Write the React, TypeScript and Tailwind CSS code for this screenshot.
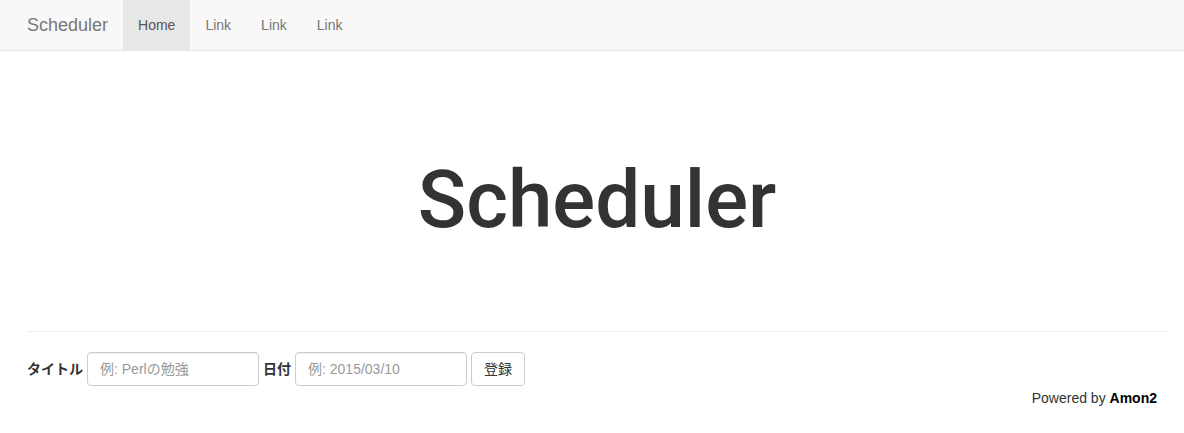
export default function App() {
  const font = { fontFamily: '"Liberation Sans", Arial, "Noto Sans CJK JP", sans-serif' }
  return (
    <div className="min-h-[433px] bg-white text-[14px] leading-[20px] text-[#333]" style={font}>
      <nav className="flex h-[51px] border-b border-[#e7e7e7] bg-[#f8f8f8] pl-[12px]">
        <a className="block h-[50px] px-[15px] py-[15px] text-[18px] leading-[20px] text-[#777]">Scheduler</a>
        <ul className="flex">
          <li><a className="block bg-[#e7e7e7] px-[15px] py-[15px] text-[#555]">Home</a></li>
          <li><a className="block px-[15px] py-[15px] text-[#777]">Link</a></li>
          <li><a className="block px-[15px] py-[15px] text-[#777]">Link</a></li>
          <li><a className="block px-[15px] py-[15px] text-[#777]">Link</a></li>
        </ul>
      </nav>

      <div className="mx-[27px] w-[1140px]">
        <div className="pt-[109px] pb-[91px] text-center">
          <h1 className="font-['Roboto',sans-serif] text-[80px] leading-[80px] font-medium text-[#333]">
            Scheduler
          </h1>
        </div>
        <hr className="border-t border-[#eee]" />

        <form className="mt-[20px] flex items-center">
          <label className="mr-[4px] font-bold">タイトル</label>
          <input
            className="h-[34px] w-[172px] rounded-[4px] border border-[#ccc] px-[12px] text-[14px] text-[#555] placeholder:text-[#999] shadow-[inset_0_1px_1px_rgba(0,0,0,0.075)]"
            placeholder="例: Perlの勉強"
          />
          <label className="mr-[4px] ml-[4px] font-bold">日付</label>
          <input
            className="h-[34px] w-[172px] rounded-[4px] border border-[#ccc] px-[12px] text-[14px] text-[#555] placeholder:text-[#999] shadow-[inset_0_1px_1px_rgba(0,0,0,0.075)]"
            placeholder="例: 2015/03/10"
          />
          <button
            type="button"
            className="ml-[4px] h-[34px] rounded-[4px] border border-[#ccc] bg-white px-[12px] text-[14px] text-[#333]"
          >
            登録
          </button>
        </form>

        <div className="mt-[2px] pr-[10px] text-right text-[#333]">
          Powered by <strong className="text-black">Amon2</strong>
        </div>
      </div>
    </div>
  )
}
